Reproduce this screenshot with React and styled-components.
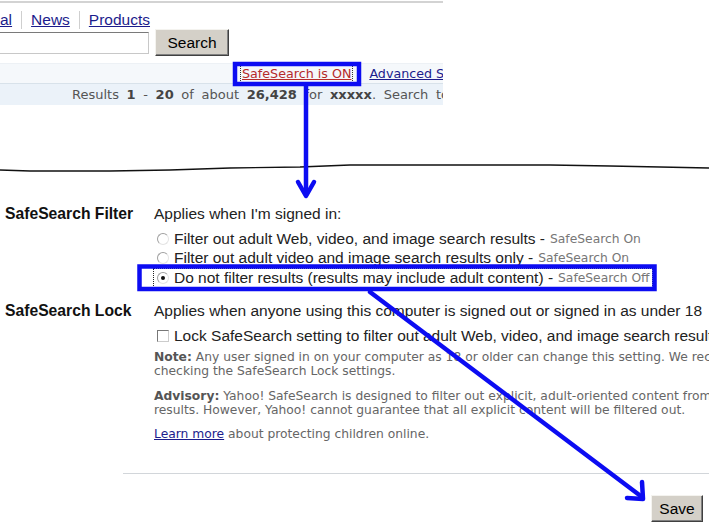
import React from 'react';
import styled, { createGlobalStyle } from 'styled-components';

const GlobalStyle = createGlobalStyle`
  html, body {
    margin: 0;
    padding: 0;
    background: #fff;
  }
  body {
    width: 709px;
    height: 526px;
    overflow: hidden;
    font-family: "Liberation Sans", Arial, sans-serif;
    color: #222;
  }
`;

const Page = styled.div`
  position: relative;
  width: 709px;
  height: 526px;
  overflow: hidden;
`;

// top fragment (search page header, cut on the left)
const TopFragment = styled.div`
  width: 443px;
  margin-top: 1px;
  border-top: 2px solid #d3d3d3;
`;

const NavRow = styled.div`
  display: flex;
  align-items: center;
  height: 18px;
  margin-top: 8px;
  font-size: 15.5px;
  line-height: 18px;
`;

const NavLink = styled.a`
  color: #1c1c8c;
  text-decoration: underline;
  padding: 0 9px;
  border-left: ${(p) => (p.$first ? 'none' : '1px solid #cfcfcf')};
  &:first-child {
    padding-left: 0;
  }
`;

const SearchRow = styled.div`
  display: flex;
  align-items: center;
  gap: 6px;
  height: 27px;
`;

const SearchInput = styled.div`
  width: 158px;
  height: 20px;
  margin-left: -11px;
  border: 1px solid #c8c8c8;
  border-top-color: #7a7a7a;
  background: #fff;
`;

const GrayButton = styled.div`
  display: flex;
  align-items: center;
  justify-content: center;
  width: ${(p) => p.$w}px;
  height: 27px;
  box-sizing: border-box;
  background: #d4d0c8;
  border: 1px solid;
  border-color: #f4f3ef #404040 #404040 #f4f3ef;
  box-shadow: inset -1px -1px 0 #808080;
  font-size: 15.5px;
  color: #000;
`;

const OptionsBar = styled.div`
  display: flex;
  align-items: center;
  height: 19px;
  margin-top: 7px;
  padding-left: 242px;
  gap: 18px;
  background: #f5f8fb;
  border-top: 1px solid #edf1f5;
  border-bottom: 1px solid #d8e2ea;
  font-family: "DejaVu Sans", Verdana, sans-serif;
  font-size: 12.7px;
  white-space: nowrap;
  overflow: hidden;
`;

const SafeLink = styled.a`
  color: ${(p) => (p.$red ? '#b52b2b' : '#1c1c8c')};
  text-decoration: underline;
  outline: ${(p) => (p.$red ? '1px dotted #333' : 'none')};
  outline-offset: 1px;
`;

const ResultsBar = styled.div`
  height: 21px;
  display: flex;
  align-items: center;
  padding-left: 72px;
  background: #ebf2f9;
  font-family: "DejaVu Sans", Verdana, sans-serif;
  font-size: 13px;
  word-spacing: 3.5px;
  color: #555;
  white-space: pre;
  overflow: hidden;
  b {
    color: #444;
  }
`;

const Tear = styled.svg`
  display: block;
  margin-top: 57px;
`;

// settings section
const Settings = styled.div`
  display: grid;
  grid-template-columns: 154px max-content;
  row-gap: 14px;
  margin-top: 30px;
  font-size: 15.5px;
  line-height: 20px;
  white-space: nowrap;
`;

const Label = styled.div`
  padding-left: 5px;
  font-size: 15.7px;
  font-weight: bold;
  color: #111;
`;

const Content = styled.div`
  display: flex;
  flex-direction: column;
`;

const Intro = styled.div`
  color: #222;
  margin-bottom: 5px;
`;

const OptionRow = styled.div`
  display: flex;
  align-items: center;
  height: ${(p) => (p.$focus ? 18 : 19.5)}px;
  margin-top: ${(p) => (p.$focus ? 1 : 0)}px;
  padding: 0 2px 0 3px;
  width: max-content;
  outline: ${(p) => (p.$focus ? '1px dotted #222' : 'none')};
`;

const Radio = styled.span`
  position: relative;
  width: 10px;
  height: 10px;
  margin-right: 5px;
  border-radius: 50%;
  border: 1px solid #a0a0a0;
  border-right-color: #e4e4e4;
  border-bottom-color: #e4e4e4;
  background: #fff;
  &::after {
    content: '';
    display: ${(p) => (p.$checked ? 'block' : 'none')};
    position: absolute;
    left: 3px;
    top: 3px;
    width: 4px;
    height: 4px;
    border-radius: 50%;
    background: #111;
  }
`;

const CheckBox = styled.span`
  width: 10px;
  height: 10px;
  margin-right: 5px;
  border: 1px solid #777;
  border-right-color: #ccc;
  border-bottom-color: #ccc;
  background: #fff;
`;

const Tag = styled.span`
  font-family: "DejaVu Sans", Verdana, sans-serif;
  font-size: 12.3px;
  color: #777;
  margin-left: 5px;
`;

const Small = styled.div`
  font-family: "DejaVu Sans", Verdana, sans-serif;
  font-size: 12.3px;
  line-height: 14.5px;
  color: #666;
  margin-top: ${(p) => p.$top}px;
  b {
    color: #555;
  }
  a {
    color: #1c1c8c;
    text-decoration: underline;
  }
`;

const Divider = styled.div`
  margin: 32px 0 0 123px;
  border-top: 1px solid #d2d6da;
`;

const SaveRow = styled.div`
  display: flex;
  justify-content: flex-end;
  padding-right: 6px;
  margin-top: 21px;
`;

// blue annotation marks drawn over the screenshot
const Marks = styled.svg`
  position: absolute;
  left: 0;
  top: 0;
  pointer-events: none;
`;

const blue = '#0c0cf2';

export default function App() {
  return (
    <Page>
      <GlobalStyle />
      <TopFragment>
        <NavRow>
          <NavLink $first>al</NavLink>
          <NavLink>News</NavLink>
          <NavLink>Products</NavLink>
        </NavRow>
        <SearchRow>
          <SearchInput />
          <GrayButton $w={74}>Search</GrayButton>
        </SearchRow>
        <OptionsBar>
          <SafeLink $red>SafeSearch is ON</SafeLink>
          <SafeLink>Advanced Search</SafeLink>
        </OptionsBar>
        <ResultsBar>
          Results <b>1</b> - <b>20</b> of about <b>26,428</b> for <b>xxxxx</b>. Search took 0.05 seconds
        </ResultsBar>
      </TopFragment>

      <Tear width="709" height="12" viewBox="0 0 709 12">
        <polyline
          points="0,8 30,9 110,9 170,8 230,6 300,5 350,3 550,3 610,4 660,5 709,6"
          fill="none"
          stroke="#111"
          strokeWidth="1.4"
        />
      </Tear>

      <Settings>
        <Label>SafeSearch Filter</Label>
        <Content>
          <Intro>Applies when I'm signed in:</Intro>
          <OptionRow>
            <Radio />
            Filter out adult Web, video, and image search results -<Tag>SafeSearch On</Tag>
          </OptionRow>
          <OptionRow>
            <Radio />
            Filter out adult video and image search results only -<Tag>SafeSearch On</Tag>
          </OptionRow>
          <OptionRow $focus>
            <Radio $checked />
            Do not filter results (results may include adult content) -<Tag>SafeSearch Off</Tag>
          </OptionRow>
        </Content>

        <Label>SafeSearch Lock</Label>
        <Content>
          <Intro>Applies when anyone using this computer is signed out or signed in as under 18</Intro>
          <OptionRow>
            <CheckBox />
            Lock SafeSearch setting to filter out adult Web, video, and image search results
          </OptionRow>
          <Small $top={4}>
            <b>Note:</b> Any user signed in on your computer as 18 or older can change this setting. We recommend
            <br />
            checking the SafeSearch Lock settings.
          </Small>
          <Small $top={10}>
            <b>Advisory:</b> Yahoo! SafeSearch is designed to filter out explicit, adult-oriented content from Yahoo! Search
            <br />
            results. However, Yahoo! cannot guarantee that all explicit content will be filtered out.
          </Small>
          <Small $top={9}>
            <a>Learn more</a> about protecting children online.
          </Small>
        </Content>
      </Settings>

      <Divider />
      <SaveRow>
        <GrayButton $w={52}>Save</GrayButton>
      </SaveRow>

      <Marks width="709" height="526" viewBox="0 0 709 526">
        <g fill="none" stroke={blue} strokeWidth="4.5" strokeLinecap="round" strokeLinejoin="round">
          <rect x="235" y="64" width="124" height="20" strokeLinecap="butt" strokeLinejoin="miter" />
          <line x1="306" y1="86" x2="306" y2="195" />
          <polyline points="298,182 306,196 314,182" />
          <rect x="139.5" y="266.5" width="515" height="22.5" strokeLinecap="butt" strokeLinejoin="miter" />
          <line x1="370" y1="292" x2="642" y2="497" />
          <polyline points="627,498 643,499 642,482" />
        </g>
      </Marks>
    </Page>
  );
}
